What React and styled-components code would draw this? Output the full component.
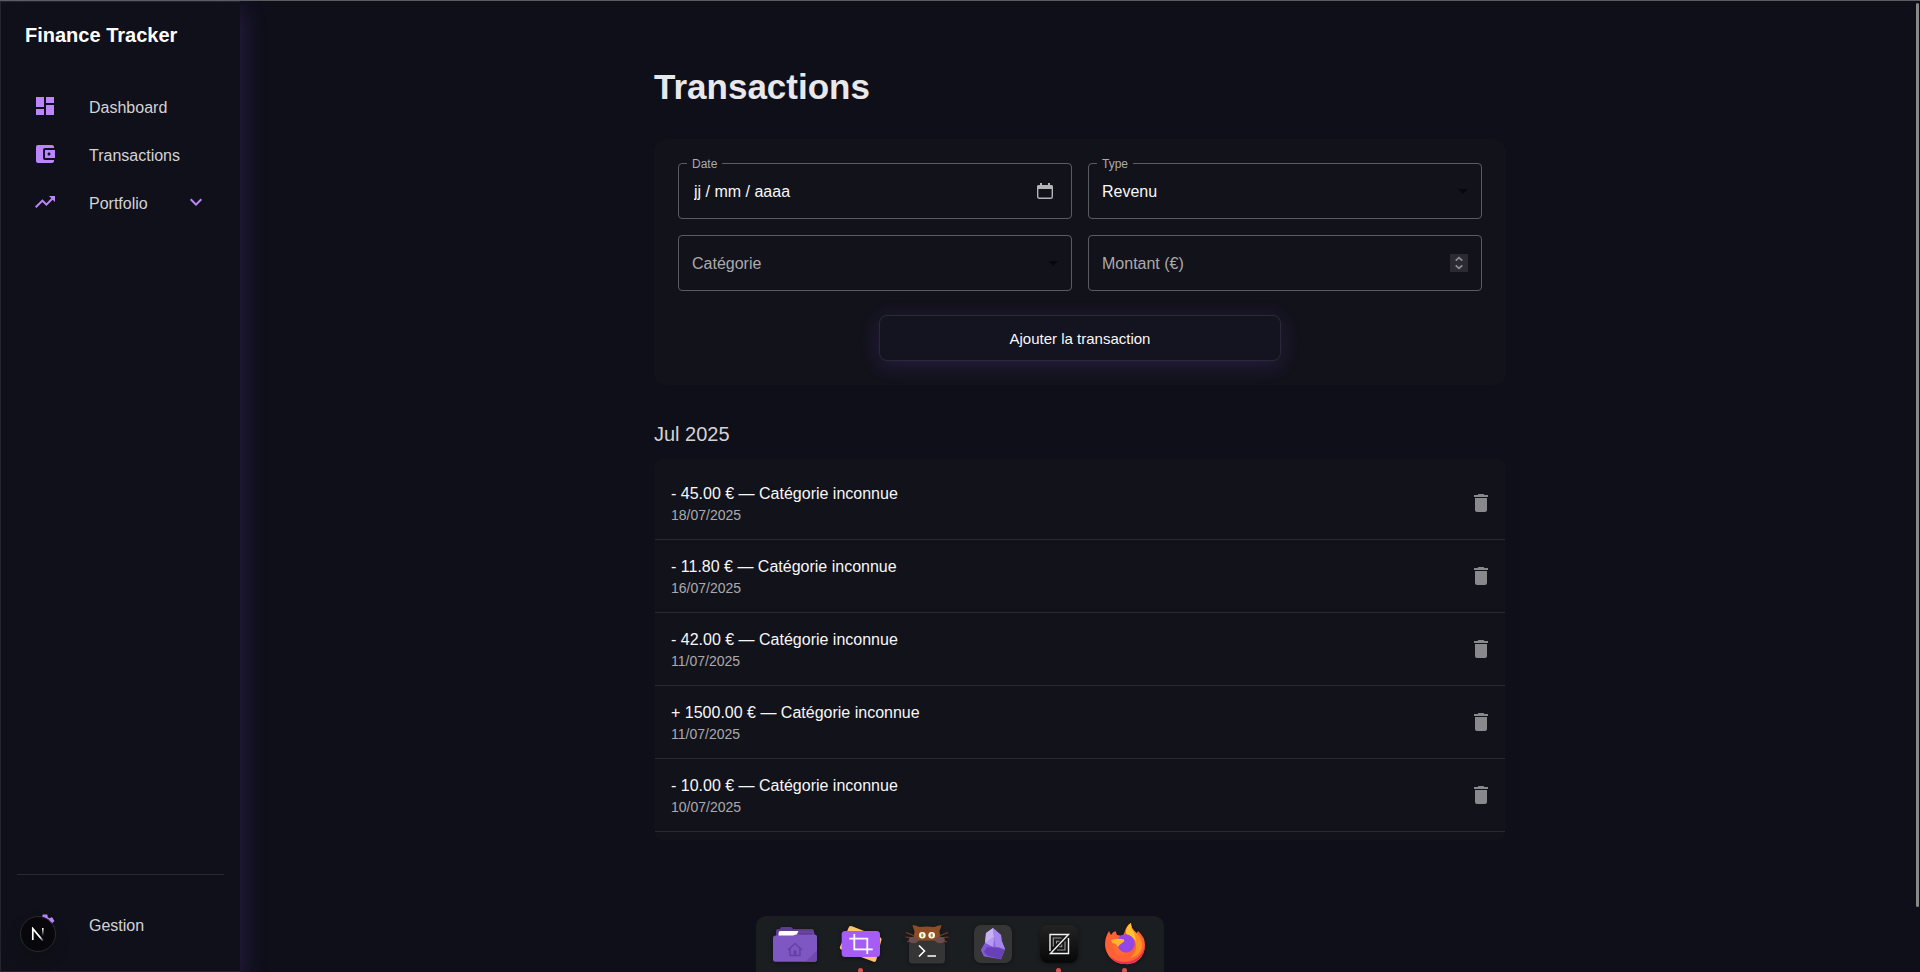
import React from "react";
import styled, { createGlobalStyle } from "styled-components";
import {
  MdDashboard,
  MdAccountBalanceWallet,
  MdTrendingUp,
  MdExpandMore,
  MdSettings,
  MdDelete,
  MdArrowDropDown,
} from "react-icons/md";

const c = {
  bg: "#0f0f1a",
  panel: "#10101a",
  card: "#12121b",
  line: "#29292f",
  outline: "#5b5b62",
  accent: "#bb86fc",
  text: "#f8f8f8",
  soft: "#d3d3d6",
  muted: "#aaaaad",
};

const GlobalStyle = createGlobalStyle`
  * { box-sizing: border-box; }
  body {
    margin: 0;
    background: ${c.bg};
    color: ${c.text};
    font: 16px/24px "Liberation Sans", Arial, sans-serif;
  }
  button, input, select { font: inherit; color: inherit; }
`;

const Shell = styled.div`
  display: grid;
  grid-template-columns: 240px minmax(0, 1fr);
  min-height: 100vh;
  border-top: 1px solid #5c5c60;
`;

const Sidebar = styled.aside`
  display: flex;
  flex-direction: column;
  padding-bottom: 23px;
  background: ${c.panel};
  border: 1px solid #24242d;
  border-right: 0;
  box-shadow: 0 8px 24px rgba(128, 80, 220, 0.27);
`;

const Brand = styled.div`
  display: flex;
  align-items: center;
  height: 66px;
  margin-bottom: 14px;
  padding: 0 24px;
  color: #fff;
  font-size: 20px;
  font-weight: 700;
`;

const NavList = styled.nav`
  display: flex;
  flex-direction: column;
`;

const NavLink = styled.a`
  display: flex;
  align-items: center;
  gap: 32px;
  height: 48px;
  padding: 0 32px;
  color: ${c.soft};
  text-decoration: none;

  svg {
    flex: none;
    color: ${c.accent};
  }
  span {
    flex: 1;
    padding-top: 3px;
  }
`;

const Divider = styled.hr`
  height: 1px;
  margin: auto 16px 25px;
  border: 0;
  background: ${c.line};
`;

const Main = styled.main`
  padding: 65px 24px 100px;
`;

const Content = styled.div`
  max-width: 852px;
  margin: 0 auto;
`;

const Title = styled.h1`
  margin: 0 0 31px;
  color: #e8e8ea;
  font-size: 35px;
  line-height: 42px;
`;

const FormCard = styled.form`
  display: flex;
  flex-direction: column;
  align-items: center;
  gap: 24px;
  padding: 24px;
  border-radius: 12px;
  background: ${c.card};
`;

const FieldGrid = styled.div`
  display: grid;
  grid-template-columns: 1fr 1fr;
  gap: 16px;
  width: 100%;
`;

const Field = styled.div`
  position: relative;
  display: flex;
  align-items: center;
  height: 56px;
  border: 1px solid ${c.outline};
  border-radius: 4px;
`;

const FloatLabel = styled.label`
  position: absolute;
  top: -8px;
  left: 8px;
  padding: 0 5px;
  background: ${c.card};
  color: ${c.muted};
  font-size: 12px;
  line-height: 16px;
`;

const RestLabel = styled.label`
  position: absolute;
  top: 16px;
  left: 13px;
  color: ${c.muted};
  pointer-events: none;
`;

const TextInput = styled.input`
  flex: 1;
  min-width: 0;
  height: 100%;
  padding: 2px ${(p) => (p.$inset ? 15 : 13)}px 0;
  border: 0;
  outline: 0;
  background: transparent;
  color: ${c.text};
`;

const SelectInput = styled.select`
  flex: 1;
  min-width: 0;
  height: 100%;
  padding: 2px 32px 0 13px;
  border: 0;
  outline: 0;
  appearance: none;
  background: transparent;
  color: ${c.text};
`;

const SelectArrow = styled(MdArrowDropDown)`
  position: absolute;
  right: 6px;
  color: #08080c;
  pointer-events: none;
`;

const IconButton = styled.button`
  display: grid;
  place-items: center;
  flex: none;
  padding: 0;
  margin-right: ${(p) => p.$end}px;
  border: 0;
  background: none;
  color: ${(p) => p.$tone};
`;

const Stepper = styled.div`
  display: grid;
  grid-template-rows: 9px 9px;
  flex: none;
  width: 18px;
  margin-right: 13px;
  background: #2b2a33;

  svg {
    display: block;
  }
`;

const SubmitButton = styled.button`
  width: 50%;
  height: 46px;
  padding: 2px 16px 0;
  border: 1px solid #2a2936;
  border-radius: 8px;
  background: #141320;
  box-shadow: 0 4px 20px rgba(128, 80, 220, 0.2);
  font-size: 15px;
`;

const Month = styled.h2`
  margin: 32px 0 7px;
  color: ${c.soft};
  font-size: 20px;
  font-weight: 400;
  line-height: 34px;
`;

const List = styled.ul`
  margin: 0;
  padding: 8px 0;
  border: 1px solid #10101a;
  border-radius: 8px;
  background: ${c.card};
  list-style: none;
`;

const Row = styled.li`
  display: flex;
  align-items: center;
  justify-content: space-between;
  padding: 15px 0 15px 16px;
  border-bottom: 1px solid ${c.line};
`;

const Amount = styled.div`
  line-height: 24px;
`;

const Day = styled.time`
  display: block;
  color: ${c.muted};
  font-size: 14px;
  line-height: 18px;
`;

const DevBadge = styled.button`
  position: fixed;
  left: 20px;
  bottom: 20px;
  display: grid;
  place-items: center;
  width: 36px;
  height: 36px;
  padding: 0;
  border: 1px solid #2b2a2c;
  border-radius: 50%;
  background: #08070c;
  box-shadow: 0 8px 16px rgba(0, 0, 0, 0.15);
`;

const ScrollThumb = styled.div`
  position: fixed;
  top: 3px;
  right: 1px;
  bottom: 65px;
  width: 3px;
  border-radius: 2px;
  background: #88888b;
`;

const DockBar = styled.div`
  position: fixed;
  left: 50%;
  bottom: 0;
  display: flex;
  height: 56px;
  padding: 4px 6px 0;
  border-radius: 10px 10px 0 0;
  background: #1b1e21;
  transform: translateX(-50%);
`;

const DockItem = styled.button`
  position: relative;
  width: 66px;
  height: 48px;
  padding: 0;
  border: 0;
  background: none;

  svg {
    display: block;
    margin: 0 auto;
    filter: drop-shadow(0 1px 2px rgba(0, 0, 0, 0.4));
  }
  &::after {
    content: "";
    position: absolute;
    left: 50%;
    bottom: -5px;
    width: 5px;
    height: 5px;
    margin-left: -3px;
    border-radius: 50%;
    background: ${(p) => (p.$running ? "#e0524d" : "transparent")};
  }
`;

const CalendarIcon = () => (
  <svg width="16" height="16" viewBox="0 0 16 16" fill="none">
    <path d="M3 0h2v2h6V0h2v2h1a2 2 0 0 1 2 2v2H0V4a2 2 0 0 1 2-2h1z" fill="currentColor" />
    <rect x="0.7" y="2.7" width="14.6" height="12.6" rx="1.6" stroke="currentColor" strokeWidth="1.4" />
  </svg>
);

const StepIcon = ({ up }) => (
  <svg width="8" height="9" viewBox="0 0 8 9" fill="none" stroke="#8d8c95" strokeWidth="1.8">
    <path d={up ? "M.7 6.7 4 3.7l3.3 3" : "M.7 2.3 4 5.3l3.3-3"} />
  </svg>
);

const NextMark = () => (
  <svg width="14" height="14" viewBox="0 0 14 14" fill="none">
    <defs>
      <linearGradient id="stem" x1="0" y1="0" x2="0" y2="1">
        <stop offset="0" stopColor="#fff" />
        <stop offset="0.9" stopColor="#fff" stopOpacity="0" />
      </linearGradient>
      <linearGradient id="slash" x1="0" y1="0" x2="1" y2="1">
        <stop offset="0.7" stopColor="#fff" />
        <stop offset="1" stopColor="#fff" stopOpacity="0.2" />
      </linearGradient>
    </defs>
    <rect x="11" y="1" width="1.6" height="9" fill="url(#stem)" />
    <path d="M1.8 13V1.6L12 13.8" stroke="url(#slash)" strokeWidth="1.7" />
  </svg>
);

const Svg = ({ children }) => (
  <svg width="48" height="48" viewBox="0 0 48 48" fill="none">
    {children}
  </svg>
);

const FolderApp = () => (
  <Svg>
    <path d="M5 18V11q0-2 2-2h2q0-2 2-2h8.500q2 0 2.500 2H41q2 0 2 2v7z" fill="#5d3c91" />
    <path d="M7.500 16v-3q0-2 2-2H41v5z" fill="#fff" />
    <path d="M25 16l2.500-5H40.500q3 0 3 3v3H24z" fill="#69459f" />
    <path d="M28.500 14.200H41" stroke="#492e77" strokeWidth="1.200" />
    <path d="M2 18q0-2.500 2.500-2.500H22l3-1H43.500q2.500 0 2.500 2.500v22q0 2.700-2.500 2.700h-39Q2 41.700 2 39z" fill="#7e57c2" />
    <path d="M46 30v9q0 2.700-2.500 2.700H34.500z" fill="#7048b0" />
    <path d="M17 30l7-6.500L31 30M19 28.500V35.500H29V28.500" stroke="#6541a5" strokeWidth="1.600" />
    <path d="M22.500 35.500v-4q0-1.500 1.500-1.500t1.500 1.500v4z" fill="#6541a5" />
  </Svg>
);

const CropApp = () => (
  <Svg>
    <path d="M15 6.200 43 17.300q2 .8 1.400 2.800L39.300 40q-.8 2.600-3.300 1.600L4 29.500q-1.700-.8-1-2.800L11.700 7.400q1-2 3.300-1.200z" fill="#ffc36b" />
    <rect x="4.700" y="11" width="38.300" height="26" rx="3.500" fill="#a65cf7" />
    <path d="M17.300 14v15.300H35.700M12.300 18.700H30.300V34" stroke="#fff" strokeWidth="1.800" />
  </Svg>
);

const TerminalApp = () => (
  <Svg>
    <path d="M9.500 5q4 .3 7 2 7.500-1.200 15 0 3-1.700 7-2-.5 3-2 6l1.500 12H10L11.500 11Q10 8 9.500 5z" fill="#8f4d25" />
    <path d="M12 16 3 12.500M12 18 2.500 17M12 19.500 4 22M36 16l9-3.500M36 18l9.500-1M36 19.500l8 2.500" stroke="#7b3d22" strokeWidth="1.200" />
    <rect x="6" y="20.500" width="36" height="23" rx="3.500" fill="#353535" />
    <ellipse cx="10.500" cy="20" rx="5" ry="3.300" fill="#6b4d4e" />
    <ellipse cx="37" cy="20" rx="5" ry="3.300" fill="#6b4d4e" />
    <circle cx="19.300" cy="15.300" r="3.300" fill="#fff" />
    <circle cx="28.700" cy="15.300" r="3.300" fill="#fff" />
    <ellipse cx="19.300" cy="15.300" rx="1.200" ry="2" fill="#a89b1e" />
    <ellipse cx="28.700" cy="15.300" rx="1.200" ry="2" fill="#a89b1e" />
    <path d="M16 25.500l5.500 5.500-5.500 5.500M24.500 36H33" stroke="#fff" strokeWidth="1.600" />
  </Svg>
);

const GemApp = () => (
  <Svg>
    <rect x="5" y="5" width="38" height="38" rx="7" fill="#363637" />
    <path d="M24 8l8 7 .6 5.500L36 29l-4 10.300-17-3L12 30l4-7 1-10z" fill="#8f6ddf" />
    <path d="M24 8l1 9-9 6 1-10z" fill="#c8b2f3" />
    <path d="M24 8l8 7 .6 5.500L36 29l-9-2-2-10z" fill="#a585ee" />
    <path d="M25 17l-1 10-8-4z" fill="#b79bf0" />
    <path d="M16 23l8 4-9 9.300L12 30z" fill="#8259d2" />
    <path d="M18 27l12 .5 5.500 2.500L32 39.300l-14-3.600-3-4z" fill="#6840b8" />
  </Svg>
);

const EditorApp = () => (
  <Svg>
    <defs>
      <linearGradient id="tile" x1="0" y1="0" x2="0" y2="1">
        <stop offset="0" stopColor="#232323" />
        <stop offset="1" stopColor="#070707" />
      </linearGradient>
    </defs>
    <rect x="5" y="5" width="38" height="38" rx="8" fill="url(#tile)" />
    <path d="M15 31V14.500H33.500L15.500 33.500H33.500V18" stroke="#f2f2f2" strokeWidth="1.400" />
    <g stroke="#9a9a9a" strokeWidth="1.100">
      <path d="M18.300 26.500V18H26.500M30 21.500V30H22" />
      <path d="M21.500 23.500V21.200h3M26.800 24.500v2.300h-2.500" />
    </g>
  </Svg>
);

const FirefoxApp = () => (
  <Svg>
    <path d="M4 25q0-8 4-14l2 4q1.500-3 4.500-4l1.500 4 6 1 3-8q2-4 5-5 0 5 4 8.500l1 2.500 2-3q7 6 7 14 0 9-6 14.500T24 44q-8.500 0-14-5.500T4 25z" fill="#ff6036" />
    <path d="M44 20q1 9-5 15.500T24 42q-9 0-15-6 5 8 15 8 9 0 14.500-5.500T44 25z" fill="#ed2b4c" />
    <path d="M30 3q0 5 4 8.500 6 5 7 12 .5 5-3 10-4 4-9 4 7-5 6-13Q34 17 27 15q-3-2-1-7 1.500-4 4-5z" fill="#ff9320" />
    <path d="M30 3q-3 2-4.500 6t1 6q5 1 8 6Q35 14 30 8z" fill="#ffc42f" />
    <circle cx="24.500" cy="23.500" r="9.300" fill="#9447e6" />
    <path d="M10 20q7-2 13-.5 1 2-2 3.500t-4.500 5q-5-3-6.500-8z" fill="#ffb62f" />
    <path d="M12 23q4 1 5.500 5 3 5 9 5Q20 38 14.500 33 11 29 12 23z" fill="#ff6b32" />
  </Svg>
);

const transactions = [
  { sign: "-", amount: "45.00", date: "18/07/2025" },
  { sign: "-", amount: "11.80", date: "16/07/2025" },
  { sign: "-", amount: "42.00", date: "11/07/2025" },
  { sign: "+", amount: "1500.00", date: "11/07/2025" },
  { sign: "-", amount: "10.00", date: "10/07/2025" },
];

const apps = [
  { name: "Fichiers", Icon: FolderApp },
  { name: "Capture", Icon: CropApp, running: true },
  { name: "Terminal", Icon: TerminalApp },
  { name: "Notes", Icon: GemApp },
  { name: "Éditeur", Icon: EditorApp, running: true },
  { name: "Firefox", Icon: FirefoxApp, running: true },
];

export default function App() {
  return (
    <>
      <GlobalStyle />
      <Shell>
        <Sidebar>
          <Brand>Finance Tracker</Brand>
          <NavList>
            <NavLink href="#dashboard">
              <MdDashboard size={24} />
              <span>Dashboard</span>
            </NavLink>
            <NavLink href="#transactions">
              <MdAccountBalanceWallet size={24} />
              <span>Transactions</span>
            </NavLink>
            <NavLink href="#portfolio">
              <MdTrendingUp size={24} />
              <span>Portfolio</span>
              <MdExpandMore size={24} />
            </NavLink>
          </NavList>
          <Divider />
          <NavLink href="#gestion">
            <MdSettings size={24} />
            <span>Gestion</span>
          </NavLink>
        </Sidebar>

        <Main>
          <Content>
            <Title>Transactions</Title>
            <FormCard onSubmit={(e) => e.preventDefault()}>
              <FieldGrid>
                <Field>
                  <FloatLabel htmlFor="date">Date</FloatLabel>
                  <TextInput id="date" type="text" defaultValue="jj / mm / aaaa" $inset />
                  <IconButton type="button" aria-label="Calendrier" $end={18} $tone="#b4b4b6">
                    <CalendarIcon />
                  </IconButton>
                </Field>
                <Field>
                  <FloatLabel htmlFor="type">Type</FloatLabel>
                  <SelectInput id="type" defaultValue="revenu">
                    <option value="revenu">Revenu</option>
                  </SelectInput>
                  <SelectArrow size={24} />
                </Field>
                <Field>
                  <RestLabel htmlFor="category">Catégorie</RestLabel>
                  <SelectInput id="category" defaultValue="">
                    <option value=""></option>
                  </SelectInput>
                  <SelectArrow size={24} />
                </Field>
                <Field>
                  <RestLabel htmlFor="amount">Montant (€)</RestLabel>
                  <TextInput id="amount" inputMode="decimal" />
                  <Stepper>
                    <IconButton type="button" aria-label="Augmenter" $end={0}>
                      <StepIcon up />
                    </IconButton>
                    <IconButton type="button" aria-label="Diminuer" $end={0}>
                      <StepIcon />
                    </IconButton>
                  </Stepper>
                </Field>
              </FieldGrid>
              <SubmitButton type="submit">Ajouter la transaction</SubmitButton>
            </FormCard>

            <Month>Jul 2025</Month>
            <List>
              {transactions.map((t) => (
                <Row key={t.date + t.amount}>
                  <div>
                    <Amount>
                      {`${t.sign} ${t.amount} € — Catégorie inconnue`}
                    </Amount>
                    <Day>{t.date}</Day>
                  </div>
                  <IconButton type="button" aria-label="Supprimer" $end={12} $tone="#89898d">
                    <MdDelete size={24} />
                  </IconButton>
                </Row>
              ))}
            </List>
          </Content>
        </Main>
      </Shell>

      <DevBadge type="button" aria-label="Outils de développement">
        <NextMark />
      </DevBadge>
      <ScrollThumb />
      <DockBar>
        {apps.map(({ name, Icon, running }) => (
          <DockItem key={name} type="button" aria-label={name} $running={running}>
            <Icon />
          </DockItem>
        ))}
      </DockBar>
    </>
  );
}
